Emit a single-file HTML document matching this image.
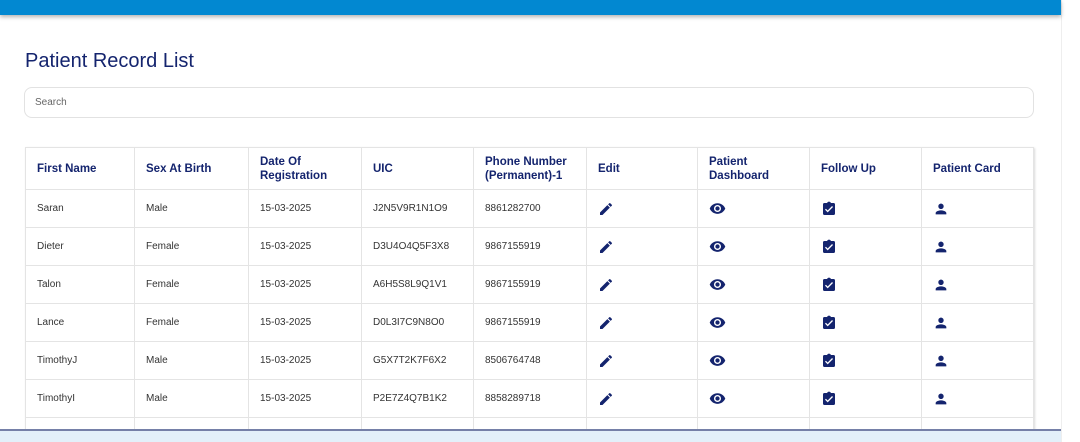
<!DOCTYPE html>
<html style="overflow:hidden;height:442px"><head><style>
*{margin:0;padding:0;box-sizing:border-box}
body{width:1080px;height:442px;overflow:hidden;background:#fff;font-family:"Liberation Sans",sans-serif;position:relative}
.top{position:absolute;left:0;top:0;width:1061px;height:15px;background:#0288d1;box-shadow:0 2px 4px rgba(0,0,0,.3);z-index:2}
.side{position:absolute;left:1061px;top:0;width:19px;height:442px;border-left:1px solid #eee;background:#fff}
h1{position:absolute;left:25px;top:50px;font-size:20px;font-weight:normal;color:#14246e}
.search{position:absolute;left:24px;top:87px;width:1010px;height:31px;border:1px solid #e2e2e2;border-radius:8px;font-size:10px;color:#666;padding:9px 10px}
.wrap{position:absolute;left:0;top:0;width:1061px;height:430px;overflow:hidden}
table{position:absolute;left:25px;top:147px;border-collapse:collapse;width:1008px;table-layout:fixed;box-shadow:1px 1px 2px rgba(0,0,0,.15)}
td,th{border:1px solid #e4e4e4;text-align:left;padding:0 11px;font-size:10px;color:#333;height:38px}
th{height:42px;color:#14246e;font-size:11.5px;font-weight:bold;line-height:14px}
svg{display:block;fill:#14246e}
.bot{position:absolute;left:0;top:429px;width:1061px;height:13px;background:#e3f0fa;border-top:2px solid #7580a8;z-index:3}
</style></head><body>
<div class="side"></div>
<div class="wrap">
<h1>Patient Record List</h1>
<div class="search">Search</div>
<table>
<colgroup><col style="width:109px"><col style="width:114px"><col style="width:113px"><col style="width:112px"><col style="width:113px"><col style="width:111px"><col style="width:112px"><col style="width:112px"><col style="width:112px"></colgroup>
<tr><th>First Name</th><th>Sex At Birth</th><th>Date Of<br>Registration</th><th>UIC</th><th>Phone Number<br>(Permanent)-1</th><th>Edit</th><th>Patient<br>Dashboard</th><th>Follow Up</th><th>Patient Card</th></tr>
<tbody id="b"></tbody>
</table>
</div>
<div class="top"></div>
<div class="bot"></div>
<script>
var rows=[["Saran","Male","J2N5V9R1N1O9","8861282700"],["Dieter","Female","D3U4O4Q5F3X8","9867155919"],["Talon","Female","A6H5S8L9Q1V1","9867155919"],["Lance","Female","D0L3I7C9N8O0","9867155919"],["TimothyJ","Male","G5X7T2K7F6X2","8506764748"],["TimothyI","Male","P2E7Z4Q7B1K2","8858289718"],["","","",""]];
var pen='<svg width="16" height="16" viewBox="0 0 24 24"><path d="M3 17.25V21h3.75L17.81 9.94l-3.75-3.75L3 17.25zM20.71 7.04a1 1 0 000-1.41l-2.34-2.34a1 1 0 00-1.41 0l-1.83 1.83 3.75 3.75 1.83-1.83z"/></svg>';
var eye='<svg width="17" height="17" viewBox="0 0 24 24"><path d="M12 4.5C7 4.5 2.73 7.61 1 12c1.73 4.39 6 7.5 11 7.5s9.27-3.11 11-7.5c-1.73-4.39-6-7.5-11-7.5zM12 17a5 5 0 110-10 5 5 0 010 10zm0-8a3 3 0 100 6 3 3 0 000-6z"/></svg>';
var clip='<svg width="16" height="16" viewBox="0 0 24 24"><path d="M19 3h-4.18C14.4 1.84 13.3 1 12 1s-2.4.84-2.82 2H5c-1.1 0-2 .9-2 2v14c0 1.1.9 2 2 2h14c1.1 0 2-.9 2-2V5c0-1.1-.9-2-2-2zm-9 14l-4-4 1.41-1.41L10 14.17l6.59-6.59L18 9l-8 8z"/></svg>';
var per='<svg width="16" height="16" viewBox="0 0 24 24"><path d="M12 12c2.21 0 4-1.79 4-4s-1.79-4-4-4-4 1.79-4 4 1.79 4 4 4zm0 2c-2.67 0-8 1.34-8 4v2h16v-2c0-2.66-5.33-4-8-4z"/></svg>';
var h='';rows.forEach(function(r,i){var d=r[0]?'15-03-2025':'';h+='<tr><td>'+r[0]+'</td><td>'+r[1]+'</td><td>'+d+'</td><td>'+r[2]+'</td><td>'+r[3]+'</td><td>'+pen+'</td><td>'+eye+'</td><td>'+clip+'</td><td>'+per+'</td></tr>'});
document.getElementById('b').innerHTML=h;
</script>
</body></html>
